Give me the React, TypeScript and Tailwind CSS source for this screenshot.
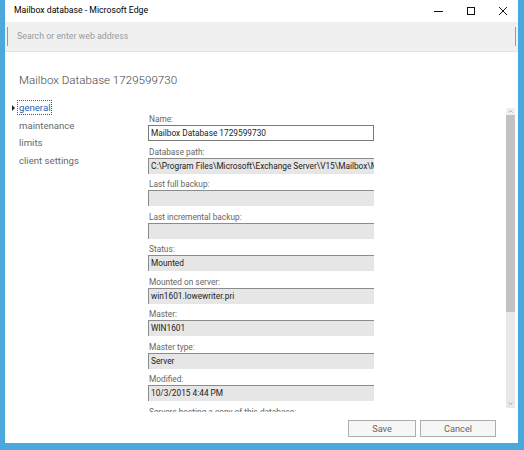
import React from 'react';

const fields: { label: string; value: string; editable?: boolean }[] = [
  { label: 'Name:', value: 'Mailbox Database 1729599730', editable: true },
  { label: 'Database path:', value: 'C:\\Program Files\\Microsoft\\Exchange Server\\V15\\Mailbox\\Mailbox Database 1729599730' },
  { label: 'Last full backup:', value: '' },
  { label: 'Last incremental backup:', value: '' },
  { label: 'Status:', value: 'Mounted' },
  { label: 'Mounted on server:', value: 'win1601.lowewriter.pri' },
  { label: 'Master:', value: 'WIN1601' },
  { label: 'Master type:', value: 'Server' },
  { label: 'Modified:', value: '10/3/2015 4:44 PM' },
  { label: 'Servers hosting a copy of this database:', value: '' },
];

const navItems = ['general', 'maintenance', 'limits', 'client settings'];

const App: React.FC = () => {
  return (
    <div
      className="w-[524px] h-[450px] overflow-hidden bg-white border-l-[5px] border-r-[6px] border-b-[7px] border-[#4aa8dc] flex flex-col text-[#333]"
      style={{ fontFamily: 'Roboto, "Open Sans", sans-serif' }}
    >
      {/* title bar */}
      <div className="h-[22px] flex items-center pl-[9px] shrink-0">
        <span className="text-[8.7px] text-black">Mailbox database - Microsoft Edge</span>
        <div className="ml-auto flex items-center h-full">
          <svg width="32" height="22" viewBox="0 0 32 22">
            <path d="M12 11.5h9" stroke="#111" strokeWidth="1" />
          </svg>
          <svg width="32" height="22" viewBox="0 0 32 22">
            <rect x="13.5" y="7.5" width="7" height="7" fill="none" stroke="#111" strokeWidth="1" />
          </svg>
          <svg width="32" height="22" viewBox="0 0 32 22">
            <path d="M13 7l8 8M21 7l-8 8" stroke="#111" strokeWidth="1" />
          </svg>
        </div>
      </div>

      {/* address bar */}
      <div className="h-[30px] shrink-0 bg-[#f0f0f0] border-b border-[#e2e2e2] flex items-center">
        <div className="w-px h-[19px] bg-[#9a9a9a] ml-[2px]" />
        <span className="ml-[9px] text-[8.8px] text-[#9b9b9b]">Search or enter web address</span>
        <div className="ml-auto w-px h-[19px] bg-[#9a9a9a] mr-[2px]" />
      </div>

      {/* heading */}
      <div className="pl-[14px] pt-[18px] h-[47px] shrink-0">
        <h1 className="text-[11.6px] leading-[20px] font-light text-[#444]">Mailbox Database 1729599730</h1>
      </div>

      {/* body */}
      <div className="h-[313px] shrink-0 flex overflow-hidden">
        <nav className="w-[143px] shrink-0 pl-[14px] flex flex-col">
          {navItems.map((item, i) => (
            <div key={item} className="h-[17.5px] flex items-center relative">
              {i === 0 && (
                <span className="absolute left-[-7px] top-[6px] w-0 h-0 border-y-[3px] border-y-transparent border-l-[3px] border-l-[#222]" />
              )}
              <span
                className={
                  i === 0
                    ? 'text-[9.6px] leading-[13px] text-[#1d66b8] outline outline-1 outline-dotted outline-[#555] -ml-px px-px'
                    : 'text-[9.6px] leading-[13px] text-[#6a6a6a]'
                }
              >
                {item}
              </span>
            </div>
          ))}
        </nav>

        <div className="w-[226px] shrink-0 pt-[14px] flex flex-col gap-[4.5px]">
          {fields.map((f) => (
            <div key={f.label} className="flex flex-col">
              <div className="h-[12px] leading-[12px] text-[8.3px] text-[#666] pl-px whitespace-nowrap">{f.label}</div>
              <div
                className={
                  f.editable
                    ? 'h-[16px] border border-[#7a7a7a] bg-white flex items-center pl-[2px] overflow-hidden'
                    : 'h-[16px] border-t border-l border-[#8c8c8c] bg-[#e6e6e6] flex items-center pl-[2px] overflow-hidden'
                }
              >
                <span className="text-[8.3px] text-[#222] whitespace-nowrap">{f.value}</span>
              </div>
            </div>
          ))}
        </div>

        <div className="flex-1" />

        {/* scrollbar */}
        <div className="w-[9px] shrink-0 mt-[9px] h-[300px] flex flex-col bg-[#e8e8e8] mr-[3px]">
          <div className="h-[7px] bg-[#f0f0f0] flex items-center justify-center">
            <svg width="5" height="3" viewBox="0 0 5 3">
              <path d="M0.5 2.5l2-2 2 2" fill="none" stroke="#999" strokeWidth="0.8" />
            </svg>
          </div>
          <div className="h-[197px] bg-[#c2c2c2]" />
          <div className="flex-1" />
          <div className="h-[9px] flex items-center justify-center">
            <svg width="5" height="3" viewBox="0 0 5 3">
              <path d="M0.5 0.5l2 2 2-2" fill="none" stroke="#999" strokeWidth="0.8" />
            </svg>
          </div>
        </div>
      </div>

      {/* footer */}
      <div className="flex-1 flex justify-end items-start pt-[8px] pr-[22px] gap-[4px]">
        <button className="w-[68px] h-[17px] border border-[#adadad] bg-[#f6f6f6] text-[9.2px] leading-[15px] text-[#666]">
          Save
        </button>
        <button className="w-[76px] h-[17px] border border-[#adadad] bg-[#f6f6f6] text-[9.2px] leading-[15px] text-[#666]">
          Cancel
        </button>
      </div>
    </div>
  );
};

export default App;
